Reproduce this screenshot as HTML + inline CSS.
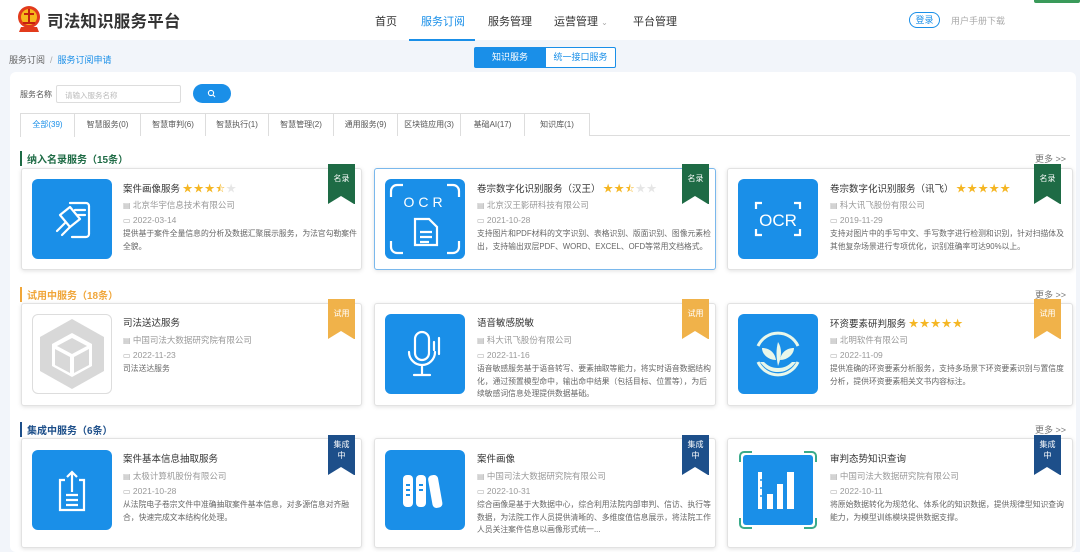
<!DOCTYPE html>
<html><head><meta charset="utf-8">
<style>
*{margin:0;padding:0;box-sizing:border-box}
body{width:1080px;height:540px;overflow:hidden;background:#f2f5fa;font-family:"Liberation Sans","Noto Sans CJK SC",sans-serif;position:relative;color:#333}
.a{position:absolute}
.hdr{left:0;top:0;width:1080px;height:40px;background:#fff}
.nav{top:13px;font-size:11px;color:#333}
.panel{left:10px;top:72px;width:1066px;height:480px;background:#fff;border-radius:6px}
.tab{top:113px;height:23px;border:1px solid #ddd;border-bottom:none;font-size:8px;color:#555;text-align:center;line-height:22px;background:#fff}
.sec{font-size:10px;font-weight:bold;padding-left:5px;border-left:2px solid}
.more{font-size:9px;color:#777}
.card{background:#fff;border:1px solid #e2e2e2;border-radius:3px;box-shadow:0 1px 4px rgba(0,0,0,.12)}
.ic{width:80px;height:80px;border-radius:6px;background:#1a8fe8}
.t{font-size:9.5px;color:#333}
.m{font-size:8.5px;color:#999}
.m b{font-weight:normal;font-family:"DejaVu Sans",sans-serif;font-size:8px;color:#aaa}
.d{font-size:7.8px;color:#666;line-height:12.5px}
.rb{width:27px;height:40px;color:#fff;font-size:8px;text-align:center;line-height:11px;padding-top:9px}
.rb::after{content:"";position:absolute;left:0;bottom:0;border-left:13.5px solid transparent;border-right:13.5px solid transparent;border-bottom:8px solid #fff}
.st{color:#f5b623;font-size:10px;letter-spacing:1px}
.st i{color:#e6e6e6;font-style:normal}
</style></head><body>
<div class="a hdr"></div>
<svg class="a" style="left:17px;top:3px" width="24" height="30" viewBox="0 0 24 30"><circle cx="12" cy="14" r="11" fill="#e23b1c"/><circle cx="12" cy="14" r="8" fill="#f6b81c"/><path d="M12 6v14M7 11h10M6 20h12" stroke="#c4210e" stroke-width="2"/><path d="M4 24l-2 5h20l-2-5" fill="#e23b1c"/></svg>
<div class="a" style="left:47px;top:8px;font-size:16.5px;font-weight:bold;color:#333;letter-spacing:0.2px">司法知识服务平台</div>
<div class="a nav" style="left:375px">首页</div>
<div class="a nav" style="left:421px;color:#1a8fe8">服务订阅</div>
<div class="a" style="left:409px;top:39px;width:66px;height:2px;background:#1a8fe8"></div>
<div class="a nav" style="left:488px">服务管理</div>
<div class="a nav" style="left:554px">运营管理 <span style="color:#aaa;font-size:8px">⌄</span></div>
<div class="a nav" style="left:633px">平台管理</div>
<div class="a" style="left:909px;top:12px;width:31px;height:16px;border:1px solid #1a8fe8;border-radius:9px;font-size:9px;color:#1a8fe8;text-align:center;line-height:14px">登录</div>
<div class="a" style="left:951px;top:14px;font-size:9px;color:#aaa">用户手册下载</div>
<div class="a" style="left:1034px;top:0;width:46px;height:3px;background:#3a9a5a;border-radius:0 0 2px 2px"></div>

<div class="a" style="left:9px;top:53px;font-size:9px;color:#666">服务订阅 <span style="color:#aaa">&nbsp;/&nbsp;</span> <span style="color:#1a8fe8">服务订阅申请</span></div>
<div class="a" style="left:474px;top:47px;width:72px;height:21px;background:#1a8fe8;border-radius:2px 0 0 2px;color:#fff;font-size:9px;text-align:center;line-height:21px">知识服务</div>
<div class="a" style="left:545px;top:47px;width:71px;height:21px;border:1px solid #1a8fe8;background:#fff;border-radius:0 2px 2px 0;color:#1a8fe8;font-size:9px;text-align:center;line-height:19px">统一接口服务</div>

<div class="a panel"></div>
<div class="a" style="left:20px;top:89px;font-size:8px;color:#555">服务名称</div>
<div class="a" style="left:56px;top:85px;width:125px;height:18px;border:1px solid #ddd;border-radius:2px;font-size:7.5px;color:#bbb;padding:4px 8px">请输入服务名称</div>
<div class="a" style="left:193px;top:84px;width:38px;height:19px;background:#1a8fe8;border-radius:10px"></div>
<svg class="a" style="left:207px;top:89px" width="9" height="9" viewBox="0 0 9 9"><circle cx="4" cy="4" r="2.6" fill="none" stroke="#fff" stroke-width="1.1"/><path d="M6 6l2 2" stroke="#fff" stroke-width="1.1"/></svg>

<div class="a" style="left:20px;top:135px;width:1050px;height:1px;background:#ddd"></div>
<div class="a tab" style="left:20px;width:55px;color:#1a8fe8;height:24px">全部(39)</div>
<div class="a tab" style="left:74px;width:67px">智慧服务(0)</div>
<div class="a tab" style="left:140px;width:66px">智慧审判(6)</div>
<div class="a tab" style="left:205px;width:64px">智慧执行(1)</div>
<div class="a tab" style="left:268px;width:66px">智慧管理(2)</div>
<div class="a tab" style="left:333px;width:65px">通用服务(9)</div>
<div class="a tab" style="left:397px;width:64px">区块链应用(3)</div>
<div class="a tab" style="left:460px;width:65px">基础AI(17)</div>
<div class="a tab" style="left:524px;width:66px">知识库(1)</div>

<!-- section 1 -->
<div class="a sec" style="left:20px;top:151px;color:#1e6b45;border-color:#1e6b45">纳入名录服务（15条）</div>
<div class="a more" style="left:1035px;top:152px">更多 &gt;&gt;</div>

<div class="a card" style="left:21px;top:168px;width:341px;height:102px"></div>
<div class="a ic" style="left:32px;top:179px"></div>
<svg class="a" style="left:32px;top:179px" width="80" height="80" viewBox="0 0 80 80"><g fill="none" stroke="#fff" stroke-width="2.2" stroke-linecap="round" stroke-linejoin="round"><path d="M38 24h16a3 3 0 0 1 3 3v28a3 3 0 0 1-3 3H40"/><path d="M43 31h10M45 36h8"/><path d="M28 36l10-8 10 12-10 8z"/><path d="M33 44l-8 8M38 48l-8 8"/></g></svg>
<div class="a t" style="left:123px;top:180px">案件画像服务 <span class="st">★★★<span style="color:#f5b623">⯪</span><i>★</i></span></div>
<div class="a m" style="left:123px;top:199px"><b>▤</b> 北京华宇信息技术有限公司</div>
<div class="a m" style="left:123px;top:215px"><b>▭</b> 2022-03-14</div>
<div class="a d" style="left:123px;top:228px;width:234px">提供基于案件全量信息的分析及数据汇聚展示服务，为法官勾勒案件全貌。</div>
<div class="a rb" style="left:328px;top:164px;background:#1e6b45">名录</div>

<div class="a card" style="left:374px;top:168px;width:342px;height:102px;border-color:#7ab8ec"></div>
<div class="a ic" style="left:385px;top:179px"></div>
<svg class="a" style="left:385px;top:179px" width="80" height="80" viewBox="0 0 80 80"><g fill="none" stroke="#fff" stroke-width="2.2"><path d="M6 18v-6a6 6 0 0 1 6-6h6M62 6h6a6 6 0 0 1 6 6v6M74 62v6a6 6 0 0 1-6 6h-6M18 74h-6a6 6 0 0 1-6-6v-6"/><path d="M30 40h14l8 8v18H30z"/><path d="M35 53h12M35 58h12M35 63h9"/></g><text x="40" y="28" font-size="14" fill="#fff" text-anchor="middle" letter-spacing="4" font-family="Liberation Sans">OCR</text></svg>
<div class="a t" style="left:477px;top:180px">卷宗数字化识别服务（汉王） <span class="st">★★<span style="color:#f5b623">⯪</span><i>★★</i></span></div>
<div class="a m" style="left:477px;top:199px"><b>▤</b> 北京汉王影研科技有限公司</div>
<div class="a m" style="left:477px;top:215px"><b>▭</b> 2021-10-28</div>
<div class="a d" style="left:477px;top:228px;width:234px">支持图片和PDF材料的文字识别、表格识别、版面识别、图像元素检出，支持输出双层PDF、WORD、EXCEL、OFD等常用文档格式。</div>
<div class="a rb" style="left:682px;top:164px;background:#1e6b45">名录</div>

<div class="a card" style="left:727px;top:168px;width:346px;height:102px"></div>
<div class="a ic" style="left:738px;top:179px"></div>
<svg class="a" style="left:738px;top:179px" width="80" height="80" viewBox="0 0 80 80"><g fill="none" stroke="#fff" stroke-width="2.2"><path d="M18 30v-6h6M56 24h6v6M62 50v6h-6M24 56h-6v-6"/></g><text x="40" y="47" font-size="17" fill="#fff" text-anchor="middle" font-family="Liberation Sans">OCR</text></svg>
<div class="a t" style="left:830px;top:180px">卷宗数字化识别服务（讯飞） <span class="st">★★★★★</span></div>
<div class="a m" style="left:830px;top:199px"><b>▤</b> 科大讯飞股份有限公司</div>
<div class="a m" style="left:830px;top:215px"><b>▭</b> 2019-11-29</div>
<div class="a d" style="left:830px;top:228px;width:238px">支持对图片中的手写中文、手写数字进行检测和识别，针对扫描体及其他复杂场景进行专项优化，识别准确率可达90%以上。</div>
<div class="a rb" style="left:1034px;top:164px;background:#1e6b45">名录</div>

<!-- section 2 -->
<div class="a sec" style="left:20px;top:287px;color:#f0a63a;border-color:#f0a63a">试用中服务（18条）</div>
<div class="a more" style="left:1035px;top:288px">更多 &gt;&gt;</div>

<div class="a card" style="left:21px;top:303px;width:341px;height:103px"></div>
<div class="a" style="left:32px;top:314px;width:80px;height:80px;border:1px solid #ddd;border-radius:6px;background:#fff"></div>
<svg class="a" style="left:32px;top:314px" width="80" height="80" viewBox="0 0 80 80"><path d="M40 5l32 18v34L40 75 8 57V23z" fill="#d8d8d8"/><path d="M40 19l20 11v22L40 63 20 52V30z" fill="#fff"/><path d="M40 24l15 8-15 8-15-8z M23 35l15 8v16l-15-8z M57 35l-15 8v16l15-8z" fill="#d8d8d8"/></svg>
<div class="a t" style="left:123px;top:315px">司法送达服务</div>
<div class="a m" style="left:123px;top:334px"><b>▤</b> 中国司法大数据研究院有限公司</div>
<div class="a m" style="left:123px;top:350px"><b>▭</b> 2022-11-23</div>
<div class="a d" style="left:123px;top:363px">司法送达服务</div>
<div class="a rb" style="left:328px;top:299px;background:#f0b24a">试用</div>

<div class="a card" style="left:374px;top:303px;width:342px;height:103px"></div>
<div class="a ic" style="left:385px;top:314px"></div>
<svg class="a" style="left:385px;top:314px" width="80" height="80" viewBox="0 0 80 80"><g fill="none" stroke="#fff" stroke-width="2.2" stroke-linecap="round"><rect x="30" y="18" width="14" height="28" rx="7"/><path d="M24 38a13 13 0 0 0 26 0M37 51v10M29 61h16M49 28v8M54 24v16"/></g></svg>
<div class="a t" style="left:477px;top:315px">语音敏感脱敏</div>
<div class="a m" style="left:477px;top:334px"><b>▤</b> 科大讯飞股份有限公司</div>
<div class="a m" style="left:477px;top:350px"><b>▭</b> 2022-11-16</div>
<div class="a d" style="left:477px;top:363px;width:234px">语音敏感服务基于语音转写、要素抽取等能力，将实时语音数据结构化，通过预置模型命中，输出命中结果（包括目标、位置等），为后续敏感词信息处理提供数据基础。</div>
<div class="a rb" style="left:682px;top:299px;background:#f0b24a">试用</div>

<div class="a card" style="left:727px;top:303px;width:346px;height:103px"></div>
<div class="a ic" style="left:738px;top:314px"></div>
<svg class="a" style="left:738px;top:314px" width="80" height="80" viewBox="0 0 80 80"><g fill="none" stroke="#e8f7ea" stroke-width="3"><path d="M20 32a22 22 0 0 1 40 0M60 48a22 22 0 0 1-40 0"/></g><g fill="#e8f7ea"><path d="M40 52c-2-10-2-16 0-24 4 6 4 14 0 24z"/><path d="M38 46c-8 0-14-6-14-12 8 0 13 5 14 12zM42 46c8 0 14-6 14-12-8 0-13 5-14 12z"/><path d="M22 48c6 8 12 10 18 10s12-2 18-10l-4 0c-4 4-8 6-14 6s-10-2-14-6z"/></g></svg>
<div class="a t" style="left:830px;top:315px">环资要素研判服务 <span class="st">★★★★★</span></div>
<div class="a m" style="left:830px;top:334px"><b>▤</b> 北明软件有限公司</div>
<div class="a m" style="left:830px;top:350px"><b>▭</b> 2022-11-09</div>
<div class="a d" style="left:830px;top:363px;width:238px">提供准确的环资要素分析服务，支持多场景下环资要素识别与置信度分析，提供环资要素相关文书内容标注。</div>
<div class="a rb" style="left:1034px;top:299px;background:#f0b24a">试用</div>

<!-- section 3 -->
<div class="a sec" style="left:20px;top:422px;color:#1d4f8a;border-color:#1d4f8a">集成中服务（6条）</div>
<div class="a more" style="left:1035px;top:423px">更多 &gt;&gt;</div>

<div class="a card" style="left:21px;top:438px;width:341px;height:110px"></div>
<div class="a ic" style="left:32px;top:450px"></div>
<svg class="a" style="left:32px;top:450px" width="80" height="80" viewBox="0 0 80 80"><g fill="none" stroke="#fff" stroke-width="2.2"><path d="M33 30h-5v30h24V30h-5"/><path d="M40 42V22M35 27l5-5 5 5M34 45h12M34 50h12M34 55h12"/></g></svg>
<div class="a t" style="left:123px;top:451px">案件基本信息抽取服务</div>
<div class="a m" style="left:123px;top:470px"><b>▤</b> 太极计算机股份有限公司</div>
<div class="a m" style="left:123px;top:486px"><b>▭</b> 2021-10-28</div>
<div class="a d" style="left:123px;top:499px;width:234px">从法院电子卷宗文件中准确抽取案件基本信息，对多源信息对齐融合，快速完成文本结构化处理。</div>
<div class="a rb" style="left:328px;top:435px;background:#1d4f8a;padding-top:4px">集成<br>中</div>

<div class="a card" style="left:374px;top:438px;width:342px;height:110px"></div>
<div class="a ic" style="left:385px;top:450px"></div>
<svg class="a" style="left:385px;top:450px" width="80" height="80" viewBox="0 0 80 80"><g fill="#fff"><rect x="18" y="25" width="10" height="32" rx="4"/><rect x="31" y="25" width="10" height="32" rx="4"/><rect x="45" y="25" width="10" height="33" rx="4" transform="rotate(-10 50 40)"/></g><g stroke="#1a8fe8" stroke-width="2"><path d="M21 35h4M21 40h4M21 45h4M34 35h4M34 40h4"/></g></svg>
<div class="a t" style="left:477px;top:451px">案件画像</div>
<div class="a m" style="left:477px;top:470px"><b>▤</b> 中国司法大数据研究院有限公司</div>
<div class="a m" style="left:477px;top:486px"><b>▭</b> 2022-10-31</div>
<div class="a d" style="left:477px;top:499px;width:234px">综合画像是基于大数据中心，综合利用法院内部审判、信访、执行等数据，为法院工作人员提供清晰的、多维度值信息展示，将法院工作人员关注案件信息以画像形式统一...</div>
<div class="a rb" style="left:682px;top:435px;background:#1d4f8a;padding-top:4px">集成<br>中</div>

<div class="a card" style="left:727px;top:438px;width:346px;height:110px"></div>
<svg class="a" style="left:738px;top:450px" width="80" height="80" viewBox="0 0 80 80"><rect x="0" y="0" width="80" height="80" rx="6" fill="#fff"/><path d="M2 12V6a4 4 0 0 1 4-4h8M66 2h8a4 4 0 0 1 4 4v6M78 68v6a4 4 0 0 1-4 4h-8M14 78H6a4 4 0 0 1-4-4v-6" fill="none" stroke="#3aaa8a" stroke-width="2"/><rect x="5" y="5" width="70" height="70" rx="3" fill="#1a8fe8"/><g fill="#fff"><rect x="20" y="22" width="4" height="37"/><rect x="29" y="44" width="6" height="15"/><rect x="39" y="34" width="6" height="25"/><rect x="49" y="22" width="7" height="37"/></g><g stroke="#1a8fe8" stroke-width="1.5"><path d="M22 30h3M22 38h3M22 46h3"/></g></svg>
<div class="a t" style="left:830px;top:451px">审判态势知识查询</div>
<div class="a m" style="left:830px;top:470px"><b>▤</b> 中国司法大数据研究院有限公司</div>
<div class="a m" style="left:830px;top:486px"><b>▭</b> 2022-10-11</div>
<div class="a d" style="left:830px;top:499px;width:238px">将原始数据转化为规范化、体系化的知识数据，提供规律型知识查询能力，为模型训练模块提供数据支撑。</div>
<div class="a rb" style="left:1034px;top:435px;background:#1d4f8a;padding-top:4px">集成<br>中</div>
</body></html>
